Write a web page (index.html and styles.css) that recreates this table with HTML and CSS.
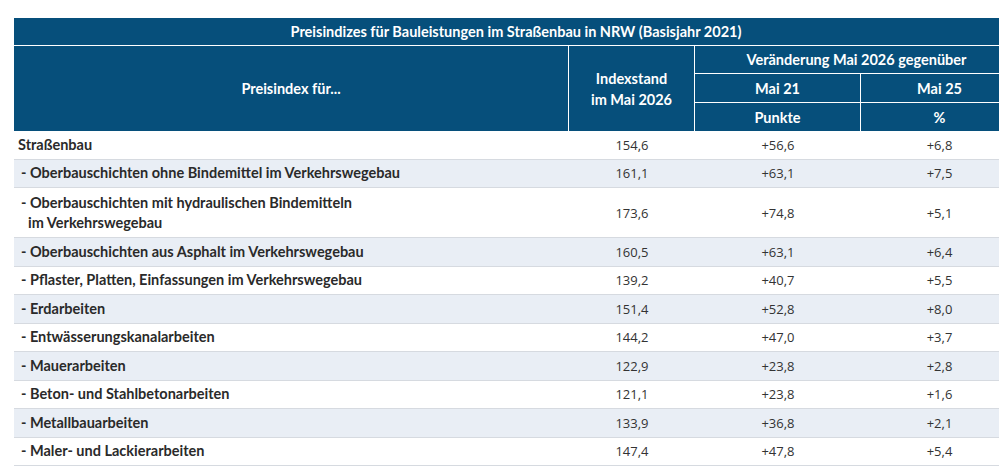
FILE: index.html
```html
<!DOCTYPE html>
<html lang="de">
<head>
<meta charset="utf-8">
<title>Preisindizes</title>
<link rel="stylesheet" href="styles.css">
</head>
<body>
<div class="table">
  <div class="head">
    <div class="h title">Preisindizes für Bauleistungen im Straßenbau in NRW (Basisjahr 2021)</div>
    <div class="h label">Preisindex für...</div>
    <div class="h stand">Indexstand<br>im Mai 2026</div>
    <div class="h change">Veränderung Mai 2026 gegenüber</div>
    <div class="h m21">Mai 21</div>
    <div class="h m25">Mai 25</div>
    <div class="h pk">Punkte</div>
    <div class="h pc">%</div>
  </div>
  <div class="row"><div class="name top">Straßenbau</div><div class="num">154,6</div><div class="num">+56,6</div><div class="num">+6,8</div></div>
  <div class="row alt"><div class="name">- Oberbauschichten ohne Bindemittel im Verkehrswegebau</div><div class="num">161,1</div><div class="num">+63,1</div><div class="num">+7,5</div></div>
  <div class="row tall"><div class="name">- Oberbauschichten mit hydraulischen Bindemitteln<br><span class="cont">im Verkehrswegebau</span></div><div class="num">173,6</div><div class="num">+74,8</div><div class="num">+5,1</div></div>
  <div class="row alt"><div class="name">- Oberbauschichten aus Asphalt im Verkehrswegebau</div><div class="num">160,5</div><div class="num">+63,1</div><div class="num">+6,4</div></div>
  <div class="row"><div class="name">- Pflaster, Platten, Einfassungen im Verkehrswegebau</div><div class="num">139,2</div><div class="num">+40,7</div><div class="num">+5,5</div></div>
  <div class="row alt"><div class="name">- Erdarbeiten</div><div class="num">151,4</div><div class="num">+52,8</div><div class="num">+8,0</div></div>
  <div class="row"><div class="name">- Entwässerungskanalarbeiten</div><div class="num">144,2</div><div class="num">+47,0</div><div class="num">+3,7</div></div>
  <div class="row alt"><div class="name">- Mauerarbeiten</div><div class="num">122,9</div><div class="num">+23,8</div><div class="num">+2,8</div></div>
  <div class="row"><div class="name">- Beton- und Stahlbetonarbeiten</div><div class="num">121,1</div><div class="num">+23,8</div><div class="num">+1,6</div></div>
  <div class="row alt"><div class="name">- Metallbauarbeiten</div><div class="num">133,9</div><div class="num">+36,8</div><div class="num">+2,1</div></div>
  <div class="row"><div class="name">- Maler- und Lackierarbeiten</div><div class="num">147,4</div><div class="num">+47,8</div><div class="num">+5,4</div></div>
</div>
</body>
</html>
```
FILE: styles.css
```css
html, body {
  margin: 0;
  padding: 0;
  overflow: hidden;
  background: #ffffff;
}
body {
  padding: 18px 0 0 14px;
  font-family: "Lato", "Open Sans", sans-serif;
  color: #2a2a2a;
}
.table {
  width: 1004px;
}
.head {
  display: grid;
  grid-template-columns: 554px 125px 165px 157px;
  grid-template-rows: 27px 27px 28px 28px;
  gap: 1px;
  background: #ffffff;
}
.h {
  background: #064f7b;
  color: #ffffff;
  font-weight: 700;
  font-size: 14.5px;
  display: flex;
  align-items: center;
  justify-content: center;
  text-align: center;
}
.title { grid-column: 1 / 5; grid-row: 1; }
.label { grid-column: 1; grid-row: 2 / 5; }
.stand { grid-column: 2; grid-row: 2 / 5; line-height: 21px; }
.change { grid-column: 3 / 5; grid-row: 2; }
.m21 { grid-column: 3; grid-row: 3; }
.m25 { grid-column: 4; grid-row: 3; }
.pk { grid-column: 3; grid-row: 4; }
.pc { grid-column: 4; grid-row: 4; }

.row {
  display: grid;
  grid-template-columns: 555px 126px 166px 157px;
  height: 28.5px;
  border-bottom: 1px solid #d6dae0;
  box-sizing: border-box;
  align-items: center;
}
.row.alt { background: #e9eef5; }
.row.tall { height: 50px; }
.name {
  font-weight: 700;
  font-size: 14.5px;
  padding-left: 7px;
  line-height: 20px;
}
.name.top { padding-left: 4px; }
.cont { padding-left: 7px; }
.num {
  font-family: "Open Sans", sans-serif;
  font-size: 13px;
  text-align: center;
  color: #333333;
}
```
